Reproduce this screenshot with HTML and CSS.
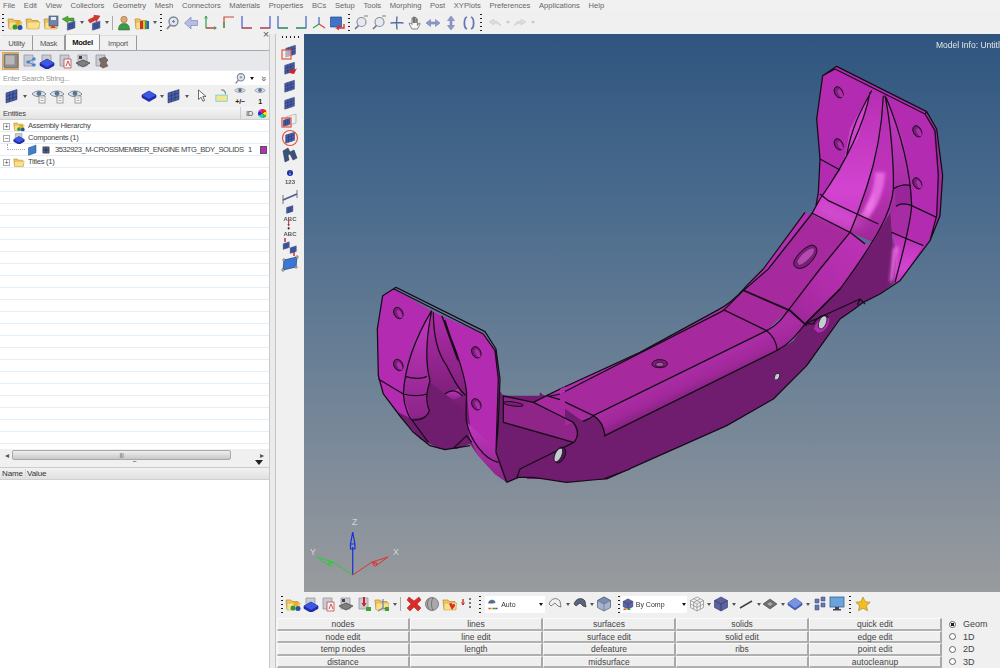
FILE: index.html
```html
<!DOCTYPE html>
<html lang="en">
<head>
<meta charset="utf-8">
<title>HyperMesh</title>
<link rel="stylesheet" href="styles.css">
</head>
<body>
<svg class="defs" width="0" height="0" aria-hidden="true">
  <defs>
    <symbol id="folder" viewBox="0 0 16 16"><path d="M1 4h5l1 1.500h6l1 8H2z" fill="#f2c75c" stroke="#b08a35" stroke-width=".7"/><path d="M2 7h13l-1.500 7H2z" fill="#fbe08a" stroke="#c29a40" stroke-width=".5"/></symbol>
    <symbol id="assembly" viewBox="0 0 16 16"><use href="#folder"/><circle cx="11" cy="8" r="2.500" fill="#e8b020"/><circle cx="8" cy="12" r="2.500" fill="#2d9a3a"/><circle cx="13" cy="12.500" r="2.500" fill="#2a4fb0"/></symbol>
    <symbol id="save" viewBox="0 0 16 16"><use href="#folder"/><rect x="6" y="1" width="9" height="10" fill="#6f84a8" stroke="#3b4d70" stroke-width=".6"/><rect x="8" y="2" width="5" height="3" fill="#e8edf5"/><path d="M7 13l3-3 3 3z" fill="#d23a30"/></symbol>
    <symbol id="mesh" viewBox="0 0 16 16"><path d="M2 5l11-3.500v10L2 15z" fill="#4a5fa8" stroke="#2c3a70" stroke-width=".6"/><path d="M5.500 4v10M9 3v10M2 8.500l11-3.500M2 12l11-3.500" stroke="#1f2b58" stroke-width=".5" fill="none"/></symbol>
    <symbol id="surf" viewBox="0 0 16 16"><path d="M2 5l10-3.500v10L2 15z" fill="#3f7fcc" stroke="#244a80" stroke-width=".7"/></symbol>
    <symbol id="grid" viewBox="0 0 16 16"><rect x="3" y="3" width="10" height="10" fill="#50608f" stroke="#222" stroke-width=".7"/><path d="M8 3v10M3 8h10" stroke="#111" stroke-width=".7"/></symbol>
    <symbol id="import" viewBox="0 0 16 16"><use href="#mesh" x="5" y="5" width="11" height="11"/><path d="M1 4l6-3v2h6v3H7v2z" fill="#4ea82e" stroke="#2d7018" stroke-width=".4"/></symbol>
    <symbol id="export" viewBox="0 0 16 16"><use href="#mesh" x="5" y="5" width="11" height="11"/><path d="M14 1L8 0v2L2 5l2 3 6-3v2z" fill="#d8352c" stroke="#8e1d16" stroke-width=".4"/></symbol>
    <symbol id="person" viewBox="0 0 16 16"><circle cx="8" cy="4.500" r="3.200" fill="#e0a870" stroke="#8a5a30" stroke-width=".5"/><path d="M2.500 15c0-5 2-6.500 5.500-6.500s5.500 1.500 5.500 6.500z" fill="#3c9a48" stroke="#246030" stroke-width=".5"/></symbol>
    <symbol id="rainbow" viewBox="0 0 16 16"><use href="#folder"/><path d="M6 6h9v8H6z" fill="#3060d0"/><path d="M6 6h3v8H6z" fill="#d03030"/><path d="M9 6h2v8H9z" fill="#e8c020"/><path d="M11 6h2v8h-2z" fill="#30a040"/></symbol>
    <symbol id="zoom" viewBox="0 0 16 16"><circle cx="8.500" cy="6.500" r="4.500" fill="#dfe5ee" stroke="#7c8594" stroke-width="1.300"/><path d="M5.500 10L2 14" stroke="#7c8594" stroke-width="1.800"/><path d="M7 6.500h3M8.500 5v3" stroke="#56627a" stroke-width=".7"/></symbol>
    <symbol id="arrowl" viewBox="0 0 16 16"><path d="M1.500 8L8 2v3.500h6.500v5H8V14z" fill="#b6bde0" stroke="#8088b8" stroke-width=".7"/></symbol>
    <symbol id="ax1" viewBox="0 0 16 16"><path d="M3 1v12h10" fill="none" stroke="#2aa24a" stroke-width="1.200"/><path d="M3 13h10" stroke="#d8413a" stroke-width="1.200"/><path d="M1.500 3.500L3 1l1.500 2.500M11 11.500l2.500 1.500-2.500 1.500" fill="none" stroke="#2aa24a" stroke-width=".8"/></symbol>
    <symbol id="ax2" viewBox="0 0 16 16"><path d="M3 13V2h10" fill="none" stroke="#d8413a" stroke-width="1.200"/><path d="M3 13V7" stroke="#2aa24a" stroke-width="1.200"/></symbol>
    <symbol id="ax3" viewBox="0 0 16 16"><path d="M3 1v12h10" fill="none" stroke="#3a62c8" stroke-width="1.200"/><path d="M3 13h10" stroke="#d8413a" stroke-width="1.200"/></symbol>
    <symbol id="ax4" viewBox="0 0 16 16"><path d="M13 1v12H3" fill="none" stroke="#3a62c8" stroke-width="1.200"/><path d="M13 13H3" stroke="#d8413a" stroke-width="1.200"/></symbol>
    <symbol id="ax5" viewBox="0 0 16 16"><path d="M3 1v12h10" fill="none" stroke="#3a62c8" stroke-width="1.200"/><path d="M3 13h10" stroke="#2aa24a" stroke-width="1.200"/></symbol>
    <symbol id="ax6" viewBox="0 0 16 16"><path d="M13 1v12H3" fill="none" stroke="#3a62c8" stroke-width="1.200"/><path d="M13 13H3" stroke="#2aa24a" stroke-width="1.200"/></symbol>
    <symbol id="iso" viewBox="0 0 16 16"><path d="M8 9V2" stroke="#3a62c8" stroke-width="1.200"/><path d="M8 9l6 4" stroke="#d8413a" stroke-width="1.200"/><path d="M8 9l-6 4" stroke="#2aa24a" stroke-width="1.200"/></symbol>
    <symbol id="screen" viewBox="0 0 16 16"><path d="M1.500 2h11v10h-11z" fill="#3f74c8" stroke="#25488a" stroke-width=".7"/><path d="M15 9v4H8l2-2-1 4" fill="none" stroke="#d8352c" stroke-width="1.400"/></symbol>
    <symbol id="zoomw" viewBox="0 0 16 16"><circle cx="8.500" cy="7" r="4.500" fill="#e6e9ee" stroke="#8a92a0" stroke-width="1.200"/><path d="M5.500 10.500L2 14" stroke="#6d7585" stroke-width="1.600"/><path d="M11 1h4" stroke="#666" stroke-width=".8"/></symbol>
    <symbol id="cross" viewBox="0 0 16 16"><path d="M8 1.500c-.6 4-.6 9 0 13M1.500 8c4-.7 9-.7 13 0" fill="none" stroke="#55709f" stroke-width="1.400"/></symbol>
    <symbol id="hand" viewBox="0 0 16 16"><path d="M5 14L2 8.500l1.500-.5L5 9.500V3h1.300v5V2h1.400v6V2.500h1.400V8V4h1.300v6.500L12 8l1.200.6L10.500 14z" fill="#f8f8f8" stroke="#555" stroke-width=".7"/></symbol>
    <symbol id="lr" viewBox="0 0 16 16"><path d="M1 8l4.500-3.500V7h5V4.500L15 8l-4.500 3.500V9h-5v2.500z" fill="#8f9ac8" stroke="#6a75a8" stroke-width=".5"/></symbol>
    <symbol id="ud" viewBox="0 0 16 16"><path d="M8 1l3.500 4.500H9v5h2.500L8 15l-3.500-4.500H7v-5H4.500z" fill="#8f9ac8" stroke="#6a75a8" stroke-width=".5"/></symbol>
    <symbol id="rot" viewBox="0 0 16 16"><path d="M6 2C2.500 3 2.500 13 6 14M10 2c3.500 1 3.500 11 0 12" fill="none" stroke="#6678b4" stroke-width="1.800"/></symbol>
    <symbol id="undo" viewBox="0 0 16 16"><path d="M2 7l5-3v2c4 0 6 2 7 5-2-2-4-2.500-7-2.500V10z" fill="#d8dbe0" stroke="#c6c9cf" stroke-width=".5"/></symbol>
    <symbol id="redo" viewBox="0 0 16 16"><path d="M14 7L9 4v2c-4 0-6 2-7 5 2-2 4-2.500 7-2.500V10z" fill="#d8dbe0" stroke="#c6c9cf" stroke-width=".5"/></symbol>
    <symbol id="collect" viewBox="0 0 16 16"><rect x="1" y="1" width="14" height="14" rx="1" fill="#8d8d8d" stroke="#555" stroke-width=".6"/><rect x="2.500" y="2.500" width="9" height="9" fill="#b8b8b8"/></symbol>
    <symbol id="bfolder" viewBox="0 0 16 16"><path d="M3 2h9v11H3z" fill="#c9ccd4" stroke="#8a8d96" stroke-width=".7"/></symbol>
    <symbol id="tree" viewBox="0 0 16 16"><use href="#bfolder"/><circle cx="7" cy="9" r="1.800" fill="#4a90d0"/><circle cx="13" cy="6" r="1.800" fill="#4a90d0"/><circle cx="13" cy="12" r="1.800" fill="#4a90d0"/><path d="M7 9l6-3M7 9l6 3" stroke="#3a6fb0" stroke-width=".8"/></symbol>
    <symbol id="diamond" viewBox="0 0 16 16"><path d="M8 3l7 4v2.500L8 13.500 1 9.500V7z" fill="#1e2bb8" stroke="#0e1570" stroke-width=".6"/><path d="M8 3l7 4-7 4-7-4z" fill="#3c58e0"/></symbol>
    <symbol id="bdiamond" viewBox="0 0 16 16"><use href="#bfolder"/><use href="#diamond" y="3" width="16" height="16"/></symbol>
    <symbol id="rfolder" viewBox="0 0 16 16"><use href="#bfolder"/><path d="M7 6h7v9H7z" fill="#f4f4f4" stroke="#c03028" stroke-width=".7"/><path d="M9 13l2-5 2 5" fill="none" stroke="#c03028" stroke-width=".8"/></symbol>
    <symbol id="stack" viewBox="0 0 16 16"><use href="#bfolder"/><path d="M8 7l7 3-7 4-7-4z" fill="#7f7f7f" stroke="#333" stroke-width=".6"/><rect x="4" y="3" width="3" height="3" fill="#444"/></symbol>
    <symbol id="stone" viewBox="0 0 16 16"><use href="#bfolder"/><path d="M6 6l6-2 3 3-2 3 2 3-5 2-3-2 1-3z" fill="#7c6b64" stroke="#4a3d38" stroke-width=".5"/></symbol>
    <symbol id="eye" viewBox="0 0 16 16"><path d="M1 6c3.500-4 10.500-4 14 0-3.500 3.500-10.500 3.500-14 0z" fill="#dde4ec" stroke="#667286" stroke-width=".8"/><circle cx="8" cy="5.500" r="2.400" fill="#5f7390"/></symbol>
    <symbol id="eyem" viewBox="0 0 16 16"><use href="#eye"/><rect x="8" y="8" width="6" height="7" fill="#fafafa" stroke="#7a7a7a" stroke-width=".7"/><path d="M9.500 10h3M9.500 12.500h3" stroke="#888" stroke-width=".7"/></symbol>
    <symbol id="cursor" viewBox="0 0 16 16"><path d="M4 1v11l3-2.500 2 4.500 2-1-2-4.500h3.500z" fill="#fafafa" stroke="#333" stroke-width=".8"/></symbol>
    <symbol id="tag" viewBox="0 0 16 16"><rect x="1" y="7" width="13" height="7" fill="#f5e68a" stroke="#6fd0e0"/><path d="M7 1c4 0 5 2 5 5" fill="none" stroke="#8a8a8a" stroke-width="1.400"/></symbol>
    <symbol id="redx" viewBox="0 0 16 16"><path d="M3 1l5 4 5-4 2 3-4 4 4 4-3 3-4-4-4 4-3-3 4-4-4-4z" fill="#dc2a28" stroke="#a01c1a" stroke-width=".5"/></symbol>
    <symbol id="ball" viewBox="0 0 16 16"><circle cx="8" cy="8" r="6.500" fill="#a9a9a9" stroke="#5f5f5f" stroke-width=".7"/><path d="M5 2.500c-2 4-2 7 0 11M9 1.500c-2 4-2 9 0 13" fill="none" stroke="#666" stroke-width=".8"/></symbol>
    <symbol id="fheart" viewBox="0 0 16 16"><use href="#folder"/><path d="M7 8c1.500-2 4-1 3 1 1-2 4-1 3 1l-3 4z" fill="#d83030"/></symbol>
    <symbol id="num" viewBox="0 0 16 16"><path d="M3 3v6" stroke="#c03028" stroke-width="1.400"/><path d="M1.500 6.500L3 9l1.500-2.500" fill="none" stroke="#c03028"/><path d="M10 2v12" stroke="#444" stroke-dasharray="2 2" stroke-width="1.400"/></symbol>
    <symbol id="bluedown" viewBox="0 0 16 16"><use href="#bfolder"/><path d="M8 1v8" stroke="#d02020" stroke-width="2"/><path d="M5.500 7L8 11l2.500-4z" fill="#d02020"/><rect x="10" y="11" width="5" height="4" fill="#40a030"/></symbol>
    <symbol id="cone" viewBox="0 0 16 16"><use href="#folder"/><path d="M9 3v9l-5 3M9 12l5 2" fill="none" stroke="#6a7db8" stroke-width="1.200"/><rect x="11" y="11" width="4" height="4" fill="#40a030"/></symbol>
    <symbol id="swatch" viewBox="0 0 16 16"><path d="M2 7c0-5 8-6 9-1l-3 1H2z" fill="#5a6d98" stroke="#39486a" stroke-width=".5"/><path d="M2 13h3v2H2z" fill="#e03a3a"/><path d="M5 13h3v2H5z" fill="#e8c020"/><path d="M8 13h3v2H8z" fill="#30a040"/><path d="M11 13h3v2h-3z" fill="#3060d0"/></symbol>
    <symbol id="bcube" viewBox="0 0 16 16"><path d="M8 1l6.500 3.500v7L8 15l-6.500-3.500v-7z" fill="#5a62a0" stroke="#33386a" stroke-width=".6"/><path d="M1.500 4.500L8 8l6.500-3.500M8 8v7" stroke="#2a2e58" stroke-width=".6" fill="none"/></symbol>
    <symbol id="bcubec" viewBox="0 0 16 16"><use href="#bcube"/><path d="M2 14h3v2H2z" fill="#e03a3a"/><path d="M5 14h3v2H5z" fill="#e8c020"/><path d="M8 14h3v2H8z" fill="#30a040"/></symbol>
    <symbol id="wirecurve" viewBox="0 0 16 16"><path d="M2 8c2-6 8-7 11-3l1 6-3-1-3-3-4 3z" fill="#f0f0f0" stroke="#666" stroke-width=".8"/></symbol>
    <symbol id="dcurve" viewBox="0 0 16 16"><path d="M2 8c2-6 8-7 11-3l1 6-3-1-3-3-4 3z" fill="#5a6680" stroke="#333" stroke-width=".7"/></symbol>
    <symbol id="cube" viewBox="0 0 16 16"><path d="M8 1l6.500 3.500v7L8 15l-6.500-3.500v-7z" fill="#a8b4cc" stroke="#4f5870" stroke-width=".7"/><path d="M1.500 4.500L8 8l6.500-3.500L8 1zM8 8v7" fill="#7e8cae" stroke="#4f5870" stroke-width=".5"/></symbol>
    <symbol id="wcube" viewBox="0 0 16 16"><path d="M8 1l6.500 3.500v7L8 15l-6.500-3.500v-7zM1.500 4.500L8 8l6.500-3.500M8 8v7M4.700 2.800L11.300 6.300v7M11.300 2.800L4.700 6.300v7M1.500 8L8 11.500 14.500 8" fill="#f4f4f4" stroke="#777" stroke-width=".6"/></symbol>
    <symbol id="line" viewBox="0 0 16 16"><path d="M2 12L14 5" stroke="#444" stroke-width="1.500"/></symbol>
    <symbol id="flat" viewBox="0 0 16 16"><path d="M8 3l7 5-7 5-7-5z" fill="#6e6e6e" stroke="#444" stroke-width=".6"/><path d="M5 8l3-2 3 2-3 2z" fill="#aaa"/></symbol>
    <symbol id="bflat" viewBox="0 0 16 16"><path d="M8 2l7 5v2l-7 5-7-5V7z" fill="#4664c4" stroke="#2a3c88" stroke-width=".6"/><path d="M8 2l7 5-7 5-7-5z" fill="#7893e0"/></symbol>
    <symbol id="squares" viewBox="0 0 16 16"><path d="M3 3h4v4H3zM9 1h4v4H9zM3 9h4v5H3zM9 7h4v4H9z" fill="#6678b0" stroke="#3a4878" stroke-width=".5"/></symbol>
    <symbol id="monitor" viewBox="0 0 16 16"><rect x="1" y="1" width="14" height="10" fill="#6aa4dc" stroke="#3a5f88" stroke-width=".8"/><path d="M6 11h4v2h2v1.500H4V13h2z" fill="#445"/></symbol>
    <symbol id="star" viewBox="0 0 16 16"><path d="M8 1l2.200 4.700 5 .6-3.700 3.400 1 5L8 12.200l-4.500 2.500 1-5L.8 6.300l5-.6z" fill="#f2bd22" stroke="#a87c10" stroke-width=".6"/></symbol>
    <symbol id="v1" viewBox="0 0 18 18"><use href="#mesh" x="3" y="0" width="14" height="14"/><rect x="1" y="6" width="9" height="9" fill="#f4efe9" fill-opacity=".6" stroke="#e4543c" stroke-width="1.200"/></symbol>
    <symbol id="v2" viewBox="0 0 18 18"><use href="#mesh" x="2" y="0" width="14" height="14"/><path d="M16 7l-3 6-5-1 2-1-2-2 3-1 1 2z" fill="#d8201c"/></symbol>
    <symbol id="v3" viewBox="0 0 18 18"><use href="#mesh" x="2" y="1" width="14" height="14"/></symbol>
    <symbol id="v5" viewBox="0 0 18 18"><path d="M5 5l10-3v9l-10 3z" fill="#eee" stroke="#999" stroke-width=".6"/><use href="#mesh" x="1" y="5" width="10" height="10"/><rect x="1" y="6" width="9" height="9" fill="none" stroke="#e4543c" stroke-width="1.200"/></symbol>
    <symbol id="v6" viewBox="0 0 18 18"><use href="#mesh" x="3" y="2" width="13" height="13"/><circle cx="9" cy="9" r="7.500" fill="none" stroke="#e4543c" stroke-width="1.200"/></symbol>
    <symbol id="binoc" viewBox="0 0 18 18"><path d="M2 5l5-3 2 4 4-2 3 8-4 2-3-6-2 1 1 5-4 2z" fill="#3d5278" stroke="#1c2a48" stroke-width=".5"/></symbol>
    <symbol id="info" viewBox="0 0 18 18"><circle cx="9" cy="9" r="4.500" fill="#1a2fa8"/><path d="M9 6.500v.8M9 8.500V12" stroke="#fff" stroke-width="1.100"/></symbol>
    <symbol id="measure" viewBox="0 0 18 18"><path d="M2 12L16 6" stroke="#4a5d8c" stroke-width="1.500"/><path d="M2 7v9M16 2v8" stroke="#555" stroke-width=".8"/></symbol>
    <symbol id="redpin" viewBox="0 0 18 18"><path d="M7 2v8" stroke="#d02020" stroke-width="1.500"/><path d="M5 8l2 3 2-3z" fill="#d02020"/><circle cx="7" cy="14" r="1.600" fill="#222"/></symbol>
    <symbol id="meshes" viewBox="0 0 18 18"><use href="#mesh" x="1" y="3" width="9" height="9"/><use href="#mesh" x="8" y="7" width="9" height="9"/><path d="M4 0v4M13 14v4" stroke="#d02020" stroke-width="1.400"/></symbol>
    <symbol id="handle" viewBox="0 0 18 18"><path d="M3 5l13-3-1 10-13 3z" fill="#3a78d8" stroke="#24406c" stroke-width=".7"/><g fill="#eee" stroke="#333" stroke-width=".6"><circle cx="3" cy="5" r="1.200"/><circle cx="16" cy="2" r="1.200"/><circle cx="15" cy="12" r="1.200"/><circle cx="2" cy="15" r="1.200"/></g></symbol>
    <linearGradient id="gTube" x1="0" y1="0" x2="0" y2="1"><stop offset="0" stop-color="#c337c1"/><stop offset="1" stop-color="#8c2488"/></linearGradient>
    <linearGradient id="gBand" gradientUnits="userSpaceOnUse" x1="380" y1="310" x2="410" y2="375"><stop offset="0" stop-color="#ab2ca4"/><stop offset=".55" stop-color="#a02899"/><stop offset="1" stop-color="#832180"/></linearGradient>
    <linearGradient id="gLow" x1="1" y1="0" x2="0" y2="1"><stop offset="0" stop-color="#bd34b8"/><stop offset=".6" stop-color="#b02ca9"/><stop offset="1" stop-color="#9b2696"/></linearGradient>
    <linearGradient id="gRib" x1="0" y1="0" x2="0" y2="1"><stop offset="0" stop-color="#b62eb3"/><stop offset=".7" stop-color="#d344d0"/><stop offset="1" stop-color="#c238bf"/></linearGradient>
    <linearGradient id="gRib2" x1="0" y1="0" x2="0" y2="1"><stop offset="0" stop-color="#b42db0"/><stop offset=".55" stop-color="#bf33bb"/><stop offset="1" stop-color="#a02898"/></linearGradient>
    <linearGradient id="gInner" x1="0" y1="0" x2="0" y2="1"><stop offset="0" stop-color="#b02cac"/><stop offset=".6" stop-color="#8a2286"/><stop offset="1" stop-color="#6e1c6c"/></linearGradient>
    <filter id="soft" x="-80%" y="-80%" width="260%" height="260%"><feGaussianBlur stdDeviation="5"/></filter>
    <filter id="soft2" x="-80%" y="-80%" width="260%" height="260%"><feGaussianBlur stdDeviation="14"/></filter>
  </defs>
</svg>

<div class="app">
  <nav class="menu">
    <span>File</span><span>Edit</span><span>View</span><span>Collectors</span><span>Geometry</span><span>Mesh</span><span>Connectors</span><span>Materials</span><span>Properties</span><span>BCs</span><span>Setup</span><span>Tools</span><span>Morphing</span><span>Post</span><span>XYPlots</span><span>Preferences</span><span>Applications</span><span>Help</span>
  </nav>

  <div class="toolbar top">
    <i class="dots"></i>
    <svg class="ic"><use href="#assembly"/></svg>
    <svg class="ic"><use href="#folder"/></svg>
    <svg class="ic"><use href="#save"/></svg>
    <svg class="ic"><use href="#import"/></svg><b class="dd"></b>
    <svg class="ic"><use href="#export"/></svg><b class="dd"></b>
    <i class="sep"></i>
    <svg class="ic"><use href="#person"/></svg>
    <svg class="ic"><use href="#rainbow"/></svg><b class="dd"></b>
    <i class="dots"></i>
    <svg class="ic"><use href="#zoom"/></svg>
    <svg class="ic"><use href="#arrowl"/></svg>
    <svg class="ic axstart"><use href="#ax1"/></svg>
    <svg class="ic"><use href="#ax2"/></svg>
    <svg class="ic"><use href="#ax3"/></svg>
    <svg class="ic"><use href="#ax4"/></svg>
    <svg class="ic"><use href="#ax5"/></svg>
    <svg class="ic"><use href="#ax6"/></svg>
    <svg class="ic"><use href="#iso"/></svg>
    <svg class="ic"><use href="#screen"/></svg>
    <i class="dots"></i>
    <svg class="ic"><use href="#zoomw"/></svg>
    <svg class="ic"><use href="#zoomw"/></svg>
    <svg class="ic"><use href="#cross"/></svg>
    <svg class="ic"><use href="#hand"/></svg>
    <svg class="ic"><use href="#lr"/></svg>
    <svg class="ic"><use href="#ud"/></svg>
    <svg class="ic"><use href="#rot"/></svg>
    <i class="dots wide"></i>
    <svg class="ic"><use href="#undo"/></svg><b class="dd pale"></b>
    <svg class="ic"><use href="#redo"/></svg><b class="dd pale"></b>
  </div>

  <div class="work">
    <aside class="side">
      <div class="panel">
        <span class="close">×</span>
        <div class="tabs">
          <span class="tab t-util">Utility</span>
          <span class="tab t-mask">Mask</span>
          <span class="tab active t-model">Model</span>
          <span class="tab t-import">Import</span>
        </div>
        <div class="browser-icons">
          <span class="pressed"><svg class="ic"><use href="#collect"/></svg></span>
          <svg class="ic"><use href="#tree"/></svg>
          <svg class="ic"><use href="#bdiamond"/></svg>
          <svg class="ic"><use href="#rfolder"/></svg>
          <svg class="ic"><use href="#stack"/></svg>
          <svg class="ic"><use href="#stone"/></svg>
        </div>
        <div class="search">
          <span class="search-text">Enter Search String...</span>
          <svg class="ic"><use href="#zoom"/></svg><b class="dd dark"></b>
          <span class="chev">»</span>
        </div>
        <div class="tools">
          <svg class="ic"><use href="#mesh"/></svg><b class="dd"></b>
          <svg class="ic eyeg"><use href="#eyem"/></svg>
          <svg class="ic"><use href="#eyem"/></svg>
          <svg class="ic"><use href="#eyem"/></svg>
          <span class="spring"></span>
          <svg class="ic"><use href="#diamond"/></svg><b class="dd"></b>
          <svg class="ic"><use href="#mesh"/></svg><b class="dd"></b>
          <svg class="ic tiny"><use href="#cursor"/></svg>
          <svg class="ic tiny"><use href="#tag"/></svg>
          <span class="eye-lab"><svg class="ic"><use href="#eye"/></svg><em>+/−</em></span>
          <span class="eye-lab"><svg class="ic"><use href="#eye"/></svg><em>1</em></span>
        </div>
        <div class="head">
          <span class="grow">Entities</span><span class="head-id">ID</span><span class="wheel"></span>
        </div>
        <div class="tree">
          <div class="row"><span class="plus">+</span><svg class="ic sm"><use href="#assembly"/></svg><span>Assembly Hierarchy</span></div>
          <div class="row"><span class="plus">−</span><svg class="ic sm"><use href="#bdiamond"/></svg><span>Components (1)</span></div>
          <div class="row child"><span class="branch"></span><svg class="ic sm"><use href="#surf"/></svg><svg class="ic xs"><use href="#grid"/></svg><span class="grow name">3532923_M-CROSSMEMBER_ENGINE MTG_BDY_SOLIDS</span><span class="num">1</span><span class="chip"></span></div>
          <div class="row"><span class="plus">+</span><svg class="ic sm"><use href="#folder"/></svg><span>Titles (1)</span></div>
        </div>
        <div class="hscroll">
          <span class="arr">◂</span><span class="thumb">|||</span><span class="arr">▸</span>
        </div>
        <div class="splitter"><span class="grip">•••</span><span class="tri"></span></div>
        <div class="head head2"><span class="h-name">Name</span><span>Value</span></div>
        <div class="props"></div>
      </div>
    </aside>

    <main class="main">
      <div class="upper">
        <div class="vbar">
          <i class="hdots"></i>
          <svg class="v"><use href="#v1"/></svg>
          <svg class="v"><use href="#v2"/></svg>
          <svg class="v"><use href="#v3"/></svg>
          <svg class="v"><use href="#v3"/></svg>
          <svg class="v"><use href="#v5"/></svg>
          <svg class="v"><use href="#v6"/></svg>
          <svg class="v"><use href="#binoc"/></svg>
          <svg class="v short"><use href="#info"/></svg><span class="vlab gap2">123</span>
          <svg class="v tall"><use href="#measure"/></svg>
          <svg class="v short flat"><use href="#v3"/></svg><span class="vlab tight">ABC</span>
          <svg class="v short flat"><use href="#redpin"/></svg><span class="vlab">ABC</span>
          <svg class="v"><use href="#meshes"/></svg>
          <svg class="v"><use href="#handle"/></svg>
        </div>
        <div class="view">
          <span class="info">Model Info: Untitled</span>
          <svg class="model" viewBox="304 35 696 558" width="696" height="558">
            <!-- middle of the crossmember: surfaces. page = (560,270) + zoomed / 3 -->
            <g transform="translate(560 270) scale(.33333)">
              <path class="dark" d="M-60 370L50 460 100 440 130 465 135 500 650 245 700 215 735 165 840 60 900 0 900 100 840 150 740 290 640 390 500 470 230 590 140 630 -100 630z"/>
              <path class="edge" d="M0 360L240 250 470 125C500 110 535 80 560 50L610 0 735 -170 755 -165 630 0 555 65 480 125 0 375z"/>
              <path class="top" d="M-10 380L480 125 555 65 630 0 755 -165 870 -110 780 0 680 130 620 185 100 440 50 460 -10 445z"/>
              <path class="band" d="M100 440L620 185C650 170 665 150 680 130L780 0 870 -110 915 -80 840 60 735 165C720 190 700 215 650 245L135 500 130 465z"/>
            </g>

            <!-- right end: surfaces. page = (800,60) + zoomed / 3 -->
            <g transform="translate(800 60) scale(.33333)">
              <path class="dark" d="M15 795L120 690 272 460 285 670 240 705 190 730 160 752 120 780 20 920 -50 920z"/>
              <path class="flange" d="M68 50L110 22 380 158 410 210 428 350 420 470 390 545 300 665 280 675 335 440 255 110 215 95 150 210 135 295 120 335 60 300 50 180z"/>
              <path class="flange" d="M60 300L120 335 60 420 48 440 55 400z"/>
              <path class="edge2" d="M375 165L380 158 410 210 428 350 420 470 405 505 410 470 413 350 400 215z"/>
              <path class="rib" d="M215 95L150 210 135 295 120 335 60 420 35 465 150 520 170 470 205 360 235 270 250 105z"/>
              <path class="bright" d="M210 100L150 210 135 295 175 240z"/>
              <path class="rib2" d="M250 105L258 115 278 240 282 390 270 460 220 550 150 520 170 470 205 360 235 270z"/>
              <path class="tube" d="M258 115L310 240 330 350 335 440 320 530 285 670 270 675 275 600 282 520 270 460 282 390 278 240z"/>
              <path class="lobe" d="M283 385C300 378 320 376 332 380L335 440C315 432 300 434 288 442z"/>
              <path class="lobe2" d="M288 442C300 434 315 432 335 440L320 530 276 520 272 470z"/>
              <path class="rib" d="M276 520L320 530 370 560 300 665 282 672 290 590z"/>
              <path class="bandlow" d="M150 520L195 555 220 550 120 690 15 795 -40 760 60 630z"/>
              <path class="glow" d="M225 340C225 390 200 440 180 470L205 480C235 440 255 390 255 340z" filter="url(#soft)"/>
              <path class="glow" d="M200 445L225 400 220 440 200 470z" filter="url(#soft)"/>
              <path class="glow" d="M278 570L296 560 280 660 268 672z" filter="url(#soft)"/>
              <path class="soft-band" d="M60 430L200 490 165 510 50 460z" filter="url(#soft2)"/>
              <path class="ln" d="M48 440L55 400 60 300 50 180 68 50 110 22 380 158 410 210 428 350 420 470 390 545 300 665 240 705 190 730 160 752 120 780M105 30L375 165 405 215 415 350 410 470 390 545M68 50L105 30M380 158L375 165"/>
              <path class="ln" d="M60 300L120 333M215 95C185 150 155 200 140 290M210 100C190 210 130 320 60 420L35 465M250 110C245 220 225 310 200 385L170 470 150 520M255 110C272 190 282 320 280 390 275 460 230 540 120 690L15 795M258 115C285 180 330 300 335 440 330 510 300 610 285 670"/>
              <path class="ln" d="M282 388C300 378 320 376 332 380M288 442C300 434 315 432 335 440L410 475M275 520L370 560M60 405L85 425 235 495M35 462L150 520 195 555M15 795L180 720 195 735M180 720L172 738"/>
              <path class="hole" d="M-18 607C-10 590 10 565 35 558 55 560 55 580 40 600 25 620 10 630 -5 628 -15 625 -20 620 -18 610z"/>
              <path class="slot" d="M-8 608C0 592 18 572 38 568 46 572 40 585 30 595 20 605 10 615 -2 618z"/>
              <g class="bolt"><ellipse cx="116" cy="100" rx="12" ry="18" transform="rotate(-28 116 100)"/><ellipse cx="116" cy="256" rx="12" ry="18" transform="rotate(-28 116 256)"/><ellipse cx="352" cy="217" rx="12" ry="18" transform="rotate(-28 352 217)"/><ellipse cx="352" cy="373" rx="12" ry="18" transform="rotate(-28 352 373)"/></g>
              <g class="boltin"><ellipse cx="121" cy="103" rx="6" ry="13" transform="rotate(-28 121 103)"/><ellipse cx="121" cy="259" rx="6" ry="13" transform="rotate(-28 121 259)"/><ellipse cx="357" cy="220" rx="6" ry="13" transform="rotate(-28 357 220)"/><ellipse cx="357" cy="376" rx="6" ry="13" transform="rotate(-28 357 376)"/></g>
            </g>

            <!-- middle of the crossmember: edges and holes, above the right end -->
            <g transform="translate(560 270) scale(.33333)">
              <path class="ln" d="M0 375L490 125 550 65 625 0 755 -165M100 440L620 185C650 170 665 150 680 130L780 0 870 -110M135 500L650 245C690 225 715 190 735 165L840 60M0 392L100 440C118 450 130 465 135 500C120 510 90 522 50 520M490 122L620 185C640 200 650 225 652 245M100 440C85 455 60 462 40 458M0 445L40 458C55 480 50 505 40 515L0 500"/>
              <path class="lnb" d="M548 63L690 125 740 170"/>
              <path class="ln" d="M0 360L240 250 470 125C500 110 535 80 560 50L610 0 735 -170"/>
              <path class="ln" d="M-40 630L140 630 230 590 500 470 640 390 740 290 840 150"/>
              <path class="dk2" d="M276 286c0-8 10-14 22-14s24 4 24 12-12 12-22 12-24-3-24-10z"/>
              <path class="ring" d="M287 286c2-5 10-7 16-6s10 4 8 8-10 5-16 4-9-3-8-6z"/>
              <ellipse class="holew" cx="651" cy="323" rx="7" ry="11" transform="rotate(28 651 323)"/>
              <ellipse class="holew" cx="133" cy="582" rx="7" ry="11" transform="rotate(28 133 582)"/>
              <path class="flange" d="M762 180C770 150 800 130 808 146 810 170 790 195 772 190z"/>
              <ellipse class="holew" cx="788" cy="160" rx="11" ry="21" transform="rotate(22 788 160)"/>
              <path class="ln" d="M735 165L760 165C770 145 795 130 806 146"/>
            </g>

            <!-- left end, page = (370,280) + zoomed / 3 -->
            <g transform="translate(370 280) scale(.33333)">
              <path class="dark" d="M100 345L185 95 290 200 400 350 530 350 700 470 780 570 700 600 590 610 490 595 445 595 410 610 375 585 325 530 300 495 260 510 210 510 150 480 85 405 40 345z"/>
              <path class="mid" d="M400 355L490 370 610 430 625 478 610 490 400 430z"/>
              <path class="top" d="M490 370L530 350 575 330 585 362 585 440 610 430z"/>
              <path class="edge" d="M500 362L585 323 585 340 540 352z"/>
              <path class="flange" d="M38 50L72 30 185 95 125 200 105 290 100 345 25 300 22 150z"/>
              <path class="tube" d="M185 95L120 210 105 290 100 345 125 420 170 410 178 395 170 345 180 305 170 240z"/>
              <path class="inner" d="M185 95L215 110 265 240 290 345 290 420 270 385 225 345 180 310 170 240z"/>
              <path class="flange" d="M215 110L340 165 378 215 390 300 380 520 300 440 290 340 265 240z"/>
              <path class="tube" d="M290 430L378 510 385 550 410 610 375 585 325 530 300 480z"/>
              <path class="flange" d="M25 300L100 345 125 420 85 400 40 345z"/>
              <path class="tube" d="M225 345L265 330 278 352 250 362z"/>
              <path class="ln" d="M78 25L345 158 378 210 390 300 385 430 378 520 410 610M72 30L340 165 375 215 385 300 378 520M38 50L78 25M38 50L22 150 25 290 40 345 85 405 130 460 180 500 225 512 300 500M25 300L100 345"/>
              <path class="ln" d="M185 95C140 170 105 250 100 345 102 385 120 420 125 422M185 95C170 170 165 250 180 305 170 340 165 360 178 395 170 420 145 425 125 422L175 490M105 292C130 300 160 300 170 292M100 345C130 352 155 350 172 345"/>
              <path class="ln" d="M215 110C240 170 280 260 290 340 288 390 288 420 290 430 300 480 340 540 385 550M190 100C190 160 200 220 230 260 250 300 270 340 290 350M218 115C230 155 250 205 262 240L225 125 265 245M225 345C240 332 260 330 278 352"/>
              <path class="ln" d="M250 508L290 470 305 490M398 350L490 370 610 430C625 450 628 470 612 490L450 570 440 598M400 350V430L610 490M490 370L530 350 570 330M530 350L570 362M540 351L570 345"/>
              <path class="ln" d="M410 610L445 595 490 595 590 610 700 600 780 570"/>
              <ellipse class="hole" cx="430" cy="375" rx="30" ry="6" transform="rotate(8 430 375)"/>
              <ellipse class="holedk" cx="570" cy="528" rx="15" ry="25" transform="rotate(25 570 528)"/>
              <ellipse class="holew" cx="565" cy="528" rx="10" ry="22" transform="rotate(25 565 528)"/>
              <g class="bolt"><ellipse cx="85" cy="102" rx="13" ry="18" transform="rotate(-28 85 102)"/><ellipse cx="85" cy="258" rx="13" ry="18" transform="rotate(-28 85 258)"/><ellipse cx="319" cy="220" rx="13" ry="18" transform="rotate(-28 319 220)"/><ellipse cx="319" cy="376" rx="13" ry="18" transform="rotate(-28 319 376)"/></g>
              <g class="boltin"><ellipse cx="89" cy="105" rx="6" ry="13" transform="rotate(-28 89 105)"/><ellipse cx="89" cy="261" rx="6" ry="13" transform="rotate(-28 89 261)"/><ellipse cx="323" cy="223" rx="6" ry="13" transform="rotate(-28 323 223)"/><ellipse cx="323" cy="379" rx="6" ry="13" transform="rotate(-28 323 379)"/></g>
            </g>

            <!-- triad -->
            <path class="ax-z" d="M352.700 576V548"/>
            <path class="ax-z" d="M350.500 545L352.700 533 354.900 545zM350.500 545h4.400v5h-4.400z"/>
            <path class="ax-x" d="M352.700 576L372 563"/>
            <path class="ax-x" d="M372 563L388 558 377 566z"/>
            <circle class="ax-x" cx="375" cy="565" r="2"/>
            <path class="ax-y" d="M352.700 576L333 563"/>
            <path class="ax-y" d="M333 563L317 558 328 566z"/>
            <circle class="ax-y" cx="330" cy="565" r="2"/>
            <text class="ax-t" x="352" y="526">Z</text>
            <text class="ax-t" x="310" y="556">Y</text>
            <text class="ax-t" x="393" y="556">X</text>
          </svg>
        </div>
      </div>

      <div class="toolbar bottom">
        <i class="dots first"></i>
        <svg class="ic"><use href="#assembly"/></svg>
        <svg class="ic"><use href="#bdiamond"/></svg>
        <svg class="ic"><use href="#rfolder"/></svg>
        <svg class="ic"><use href="#stack"/></svg>
        <svg class="ic"><use href="#bluedown"/></svg>
        <svg class="ic"><use href="#cone"/></svg><b class="dd"></b>
        <i class="sep"></i>
        <svg class="ic redx"><use href="#redx"/></svg>
        <svg class="ic"><use href="#ball"/></svg>
        <svg class="ic"><use href="#fheart"/></svg>
        <svg class="ic"><use href="#num"/></svg>
        <i class="dots"></i>
        <span class="combo c1"><svg class="ic sm"><use href="#swatch"/></svg>Auto<b class="dd dark"></b></span>
        <svg class="ic"><use href="#wirecurve"/></svg><b class="dd"></b>
        <svg class="ic"><use href="#dcurve"/></svg><b class="dd"></b>
        <svg class="ic"><use href="#cube"/></svg>
        <i class="dots push"></i>
        <span class="combo c2"><svg class="ic sm"><use href="#bcubec"/></svg>By Comp<b class="dd dark"></b></span>
        <svg class="ic"><use href="#wcube"/></svg><b class="dd"></b>
        <svg class="ic"><use href="#bcube"/></svg><b class="dd"></b>
        <svg class="ic"><use href="#line"/></svg><b class="dd"></b>
        <svg class="ic"><use href="#flat"/></svg><b class="dd"></b>
        <svg class="ic"><use href="#bflat"/></svg><b class="dd"></b>
        <svg class="ic"><use href="#squares"/></svg>
        <svg class="ic"><use href="#monitor"/></svg>
        <i class="dots"></i>
        <svg class="ic"><use href="#star"/></svg>
      </div>

      <div class="pages">
        <div class="buttons">
          <button>nodes</button><button>lines</button><button>surfaces</button><button>solids</button><button>quick edit</button>
          <button>node edit</button><button>line edit</button><button>surface edit</button><button>solid edit</button><button>edge edit</button>
          <button>temp nodes</button><button>length</button><button>defeature</button><button>ribs</button><button>point edit</button>
          <button>distance</button><button></button><button>midsurface</button><button></button><button>autocleanup</button>
        </div>
        <div class="radios">
          <label><span class="radio on"></span>Geom</label>
          <label><span class="radio"></span>1D</label>
          <label><span class="radio"></span>2D</label>
          <label><span class="radio"></span>3D</label>
        </div>
      </div>
    </main>
  </div>
</div>
</body>
</html>
```

FILE: styles.css
```css
* { box-sizing: border-box; }
html, body { margin: 0; padding: 0; width: 1000px; height: 668px; overflow: hidden; background: #f0f0f0; }
body { font-family: "Liberation Sans", Arial, sans-serif; font-size: 7px; color: #333; }
.defs { position: absolute; }
.app { width: 1000px; height: 668px; display: flex; flex-direction: column; overflow: hidden; filter: blur(.35px); }

.menu { height: 11px; display: flex; gap: 8.6px; padding-left: 3px; align-items: center; font-size: 7.6px; color: #666; background: #f1f1f1; line-height: 11px; white-space: nowrap; }

.toolbar { display: flex; align-items: center; gap: 2px; flex: none; }
.top { height: 23px; padding-left: 1px; background: #f0f0f0; }
.top .axstart { margin-left: 2px; }
.ic { width: 16px; height: 16px; flex: none; display: block; }
.dots { width: 2px; height: 17px; flex: none; margin: 0 1px; background: repeating-linear-gradient(#222 0 1px, transparent 1px 4px); }
.dots.wide { margin-right: 3px; }
.sep { width: 1px; height: 14px; flex: none; background: #aaa; margin: 0 1px; }
.dd { width: 0; height: 0; flex: none; margin: 0 0 0 1px; border-left: 2.500px solid transparent; border-right: 2.500px solid transparent; border-top: 3px solid #555; }
.dd.pale { border-top-color: #c8c8c8; }
.dd.dark { border-top-color: #111; margin-left: auto; }

.work { flex: 1; display: flex; min-height: 0; }
.side { width: 276px; flex: none; border-right: 1px solid #c4c4c4; padding-right: 5px; background: #ebebeb; }
.panel { position: relative; width: 270px; height: 100%; display: flex; flex-direction: column; border-right: 1px solid #c8c8c8; background: #f0f0f0; font-size: 7.6px; letter-spacing: -.28px; }
.close { position: absolute; right: 0; top: -5px; font-size: 11px; line-height: 11px; color: #555; }

.tabs { height: 16px; display: flex; align-items: flex-end; padding-left: 1px; margin-top: 1px; flex: none; border-bottom: 1px solid #a9a9a9; }
.tab { height: 15px; line-height: 16px; text-align: center; color: #555; border-right: 1px solid #999; border-top: 1px solid #ddd; }
.t-util { width: 32px; }
.t-mask { width: 32px; }
.t-model { width: 35px; }
.t-import { width: 37px; }
.tab.active { color: #111; font-weight: bold; background: #f8f8f8; border-left: 1px solid #999; height: 16px; }

.browser-icons { height: 19px; display: flex; align-items: center; gap: 2px; padding-left: 2px; flex: none; background: #e6e8ec; }
.pressed { width: 17px; height: 18px; display: flex; align-items: center; justify-content: center; background: #f7c98c; border: 1px solid #d9a766; }

.search { height: 14px; display: flex; align-items: center; gap: 1px; background: #fff; margin-top: 1px; padding-left: 3px; flex: none; color: #999; }
.search-text { flex: 1; }
.search .ic { width: 13px; height: 13px; }
.search .dd.dark { margin-left: 2px; }
.chev { width: 12px; text-align: center; color: #444; transform: rotate(90deg); font-size: 9px; line-height: 9px; margin-left: 2px; }

.tools { height: 22px; display: flex; align-items: center; gap: 2px; padding: 0 0 0 4px; flex: none; background: #f0f0f0; }
.tools .eyeg { margin-left: 2px; }
.spring { flex: 1; }
.tiny { width: 14px; height: 14px; margin-left: 4px; }
.eye-lab { display: flex; flex-direction: column; align-items: center; width: 18px; height: 20px; }
.eye-lab .ic { height: 12px; }
.eye-lab em { font-style: normal; font-size: 7px; line-height: 8px; color: #222; font-weight: bold; }

.head { height: 13px; display: flex; align-items: center; padding-left: 3px; flex: none; color: #444; background: linear-gradient(#f6f6f6, #e2e2e2); border-bottom: 1px solid #d0d0d0; }
.grow { flex: 1; }
.head-id { width: 18px; border-left: 1px solid #ccc; text-align: center; height: 100%; line-height: 13px; }
.wheel { width: 9px; height: 9px; margin: 0 2px 0 0; border-radius: 50%; background: conic-gradient(#e22 0 16%, #fd0 16% 33%, #2b4 33% 50%, #2cc 50% 66%, #23c 66% 83%, #c2c 83%); }

.tree { flex: 1; min-height: 0; background: #fff repeating-linear-gradient(#fff 0 11px, #e2eff8 11px 12px); }
.row { height: 12px; display: flex; align-items: center; gap: 3px; padding-left: 3px; color: #444; white-space: nowrap; line-height: 12px; }
.plus { width: 7px; height: 7px; border: 1px solid #aaa; font-size: 7px; line-height: 5px; text-align: center; color: #444; background: #fff; flex: none; }
.ic.sm { width: 12px; height: 12px; }
.ic.xs { width: 10px; height: 10px; }
.child { padding-left: 7px; padding-right: 2px; gap: 2px; }
.branch { width: 18px; height: 6px; margin-top: -6px; border-left: 1px dotted #aaa; border-bottom: 1px dotted #aaa; flex: none; }
.name { letter-spacing: -.43px; padding-left: 2px; }
.num { width: 10px; text-align: center; margin-right: 4px; }
.chip { width: 8px; height: 8px; background: #b52fb4; border: 1px solid #555; }

.hscroll { height: 12px; display: flex; align-items: center; padding: 0 2px; background: #f0f0f0; flex: none; color: #555; }
.arr { width: 10px; text-align: center; flex: none; }
.thumb { flex: 1; height: 10px; margin-right: 26px; border: 1px solid #a8a8a8; border-radius: 2px; background: linear-gradient(#f0f0f0, #c8c8c8); text-align: center; font-size: 6px; line-height: 8px; }
.splitter { position: relative; height: 6px; flex: none; background: #f0f0f0; text-align: center; }
.grip { font-size: 4px; line-height: 4px; color: #666; display: block; margin-top: -1px; }
.tri { position: absolute; right: 6px; top: -1px; width: 0; height: 0; border-left: 4px solid transparent; border-right: 4px solid transparent; border-top: 5px solid #222; }
.head2 { height: 13px; padding-left: 2px; border-top: 1px solid #ccc; background: linear-gradient(#f2f2f2, #e0e0e0); color: #333; font-size: 8px; letter-spacing: -.1px; }
.h-name { width: 24px; border-right: 1px solid #d6d6d6; margin-right: 1px; }
.props { height: 188px; flex: none; background: #fff; }

.main { flex: 1; min-width: 0; display: flex; flex-direction: column; }
.upper { height: 558px; display: flex; flex: none; }
.vbar { width: 28px; flex: none; display: flex; flex-direction: column; align-items: center; background: #f0f0f0; padding-top: 2px; }
.hdots { width: 17px; height: 1.500px; margin-bottom: 6px; background: repeating-linear-gradient(90deg, #222 0 1px, transparent 1px 4px); flex: none; }
.v { width: 18px; height: 18px; flex: none; margin-bottom: -1px; }
.v.tall { margin-bottom: -2px; }
.v.short { height: 12px; margin: 4px 0 0; }
.v.flat { margin-top: 0; }
.vlab { font-size: 6px; line-height: 7px; font-weight: bold; color: #555; }
.vlab.gap2 { margin-bottom: 2px; }
.vlab.tight { margin-bottom: -4px; }

.view { position: relative; flex: 1; min-width: 0; overflow: hidden; background: linear-gradient(#2f557f 0%, #4a6b8d 30%, #6b8096 60%, #999b9e 100%); }
.info { position: absolute; left: 632px; top: 6px; color: #e6e6e6; white-space: nowrap; font-size: 8.5px; }
.model { display: block; }

.dark { fill: #711d6f; }
.mid { fill: #8f2489; }
.top { fill: #a62a9e; }
.edge { fill: #b42eb0; }
.edge2 { fill: #a328a0; }
.band { fill: url(#gBand); }
.bandlow { fill: url(#gLow); }
.flange { fill: #b22bb0; }
.rib { fill: url(#gRib); }
.rib2 { fill: url(#gRib2); }
.bright { fill: #d044ce; }
.tube { fill: url(#gTube); }
.lobe { fill: #98269a; }
.lobe2 { fill: #a82ba6; }
.inner { fill: url(#gInner); }
.glow { fill: #f47cf0; opacity: .7; }
.soft-band { fill: #d860d4; opacity: .5; }
.ln { fill: none; stroke: #140c16; stroke-width: 1.250px; stroke-linejoin: round; vector-effect: non-scaling-stroke; }
.lnb { fill: none; stroke: #140c16; stroke-width: 1.900px; vector-effect: non-scaling-stroke; }
.hole, .holew, .holedk, .dk2, .bolt ellipse { vector-effect: non-scaling-stroke; }
.hole { fill: #7a1f78; stroke: #140c16; stroke-width: 1px; }
.slot { fill: #b24ab0; }
.dk2 { fill: #7a1f78; stroke: #140c16; stroke-width: 1px; }
.ring { fill: #b24ab0; stroke: #140c16; stroke-width: 2px; }
.holew { fill: #c4ccd2; stroke: #140c16; stroke-width: .8px; }
.holedk { fill: #511450; stroke: #140c16; stroke-width: 1px; }
.bolt ellipse { fill: #7a1f78; stroke: #140c16; stroke-width: 1px; }
.boltin ellipse { fill: #b22bb0; stroke: none; }

.ax-z { fill: none; stroke: #1a2ee0; stroke-width: 1.200px; }
.ax-x { fill: none; stroke: #e02a28; stroke-width: .9px; }
.ax-y { fill: none; stroke: #20d030; stroke-width: .9px; }
.ax-t { fill: #d6d6d6; font-family: "Liberation Sans", Arial, sans-serif; font-size: 9px; }

.bottom { height: 24px; padding-left: 3px; gap: 1.800px; background: #f0f0f0; }
.bottom .dots { margin: 0 2px; }
.bottom .dots.first { margin-right: 0; }
.bottom .dots.push { margin-left: 4px; }
.bottom .sep { margin: 0 2px; }
.bottom .redx { margin-left: 1px; }
.combo { height: 17px; display: flex; align-items: center; gap: 2px; padding: 0 2px; background: #fff; font-size: 7px; color: #333; flex: none; }
.c1 { width: 60px; }
.c2 { width: 66px; margin-left: -3px; padding: 0 1px; }

.pages { flex: 1; display: flex; min-height: 0; background: #f0f0f0; padding: 2px 0 0 1px; }
.buttons { width: 666px; display: grid; grid-template-columns: repeat(5, 133px); grid-auto-rows: 12.500px; flex: none; }
.buttons button { font: inherit; font-size: 8.5px; color: #444; background: #efefef; border: 0; border-right: 2px solid #a8a8a8; border-bottom: 2px solid #b0b0b0; border-top: 1px solid #fafafa; border-left: 1px solid #fafafa; padding: 0; height: 12.500px; line-height: 10px; }
.radios { flex: 1; display: flex; flex-direction: column; padding-left: 6px; }
.radios label { height: 12.500px; display: flex; align-items: center; gap: 7px; color: #444; font-size: 9px; }
.radio { width: 7px; height: 7px; border-radius: 50%; border: 1px solid #666; background: #fff; flex: none; }
.radio.on { background: radial-gradient(#222 0 1.500px, #fff 2px); }
```
